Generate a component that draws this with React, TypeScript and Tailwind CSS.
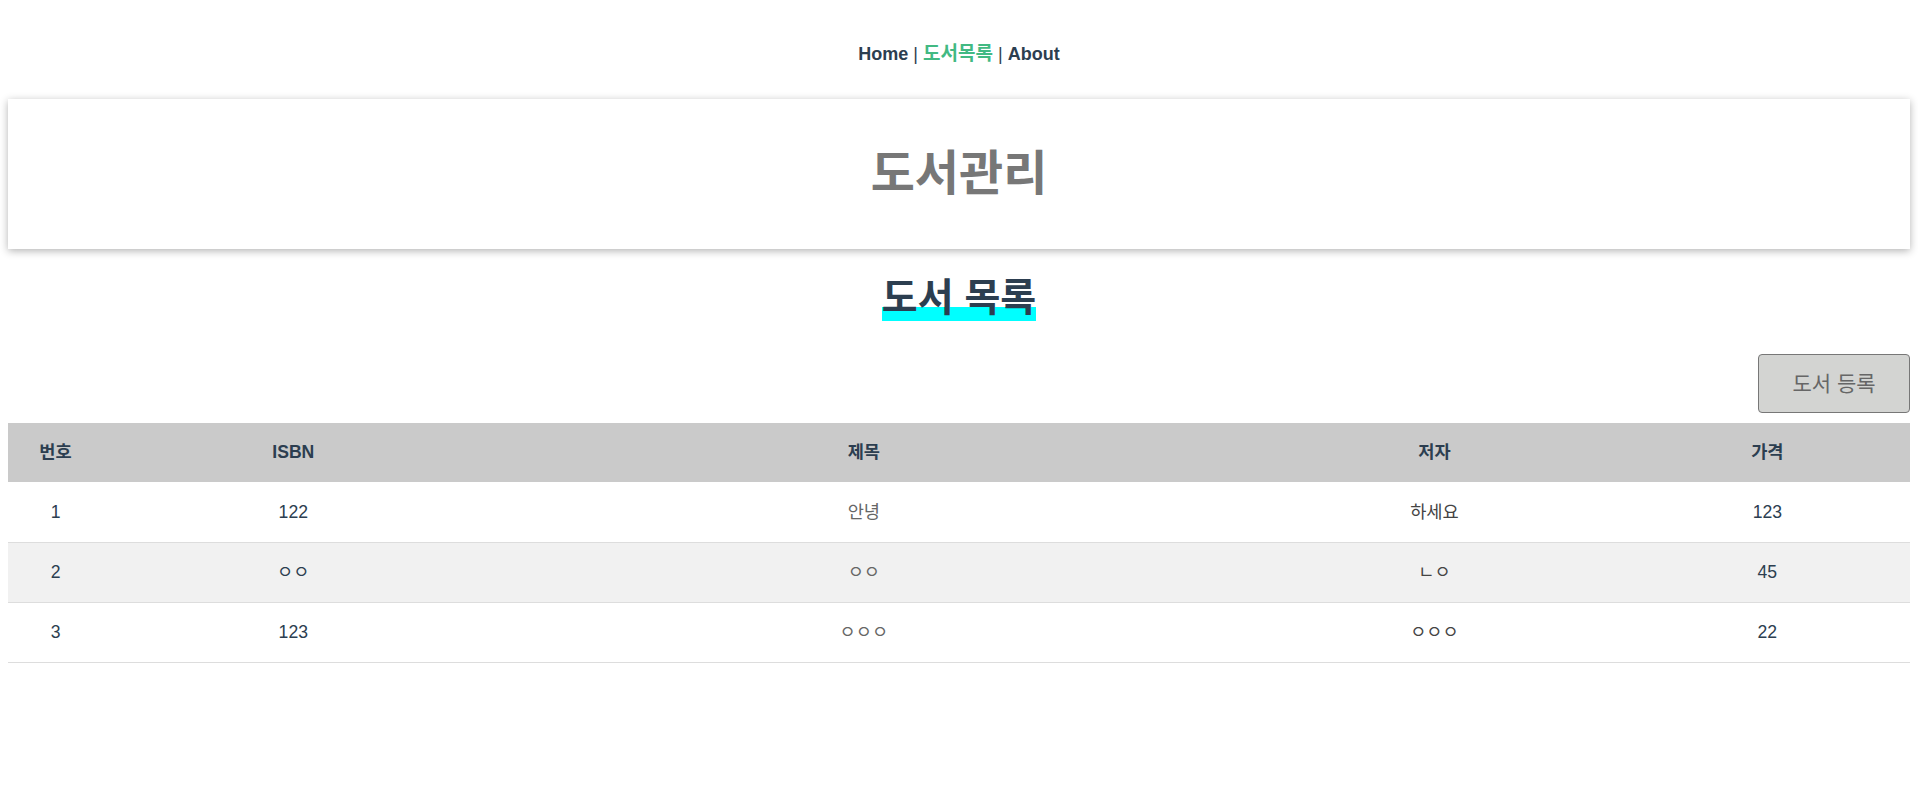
import React from 'react';

type TBook = {
    id: number,
    isbn: string,
    title: string,
    author: string,
    price: string
}

const books: TBook[] = [
    {id: 1, isbn: '122', title: '안녕', author: '하세요', price: '123'},
    {id: 2, isbn: 'ㅇㅇ', title: 'ㅇㅇ', author: 'ㄴㅇ', price: '45'},
    {id: 3, isbn: '123', title: 'ㅇㅇㅇ', author: 'ㅇㅇㅇ', price: '22'},
];

const App = () => {

    return (
        <div
            className="min-h-screen bg-white text-center text-[#2c3e50] font-['Liberation_Sans','Noto_Sans_CJK_KR',sans-serif]">
            <nav className="pt-[44px] pb-[35px] text-[18px] leading-[20px]">
                <a className="font-bold text-[#2c3e50]">Home</a>
                {' | '}
                <a className="font-bold text-[19px] text-[#42b983]">도서목록</a>
                {' | '}
                <a className="font-bold text-[#2c3e50]">About</a>
            </nav>

            <div className="mx-2 flex h-[150px] items-center justify-center bg-white shadow-[0_2px_8px_rgba(0,0,0,0.3)]">
                <h1 className="text-[48px] font-bold leading-none text-[#777777]">도서관리</h1>
            </div>

            <h2 className="mt-[26px] text-[39px] font-bold leading-[46px]">
                <span
                    className="inline-block h-[46px] bg-[linear-gradient(to_bottom,transparent_70%,#00ffff_70%)]">
                    도서 목록
                </span>
            </h2>

            <div className="mt-[33px] flex justify-end px-2">
                <button
                    type="button"
                    className="h-[59px] w-[152px] rounded-[4px] border border-[#777777] bg-[#d3d4d2] text-[21px] text-[#666666]"
                >
                    도서 등록
                </button>
            </div>

            <div className="mt-[10px] px-2">
                <table className="w-full table-fixed border-collapse text-[17.6px]">
                    <colgroup>
                        <col className="w-[5%]"/>
                        <col className="w-[20%]"/>
                        <col className="w-[40%]"/>
                        <col className="w-[20%]"/>
                        <col className="w-[15%]"/>
                    </colgroup>
                    <thead>
                    <tr className="h-[59px] bg-[#cacaca] font-bold">
                        <th>번호</th>
                        <th>ISBN</th>
                        <th>제목</th>
                        <th>저자</th>
                        <th>가격</th>
                    </tr>
                    </thead>
                    <tbody>
                    {books.map((book, i) => (
                        <tr key={book.id}
                            className={(i % 2 === 1 ? 'bg-[#f1f1f1] ' : 'bg-white ') + 'h-[60px] border-b border-[#dddddd]'}>
                            <td>{book.id}</td>
                            <td>{book.isbn}</td>
                            <td className="text-[#666666]">{book.title}</td>
                            <td className="text-[#444444]">{book.author}</td>
                            <td>{book.price}</td>
                        </tr>
                    ))}
                    </tbody>
                </table>
            </div>
        </div>
    );
};

export default App;
